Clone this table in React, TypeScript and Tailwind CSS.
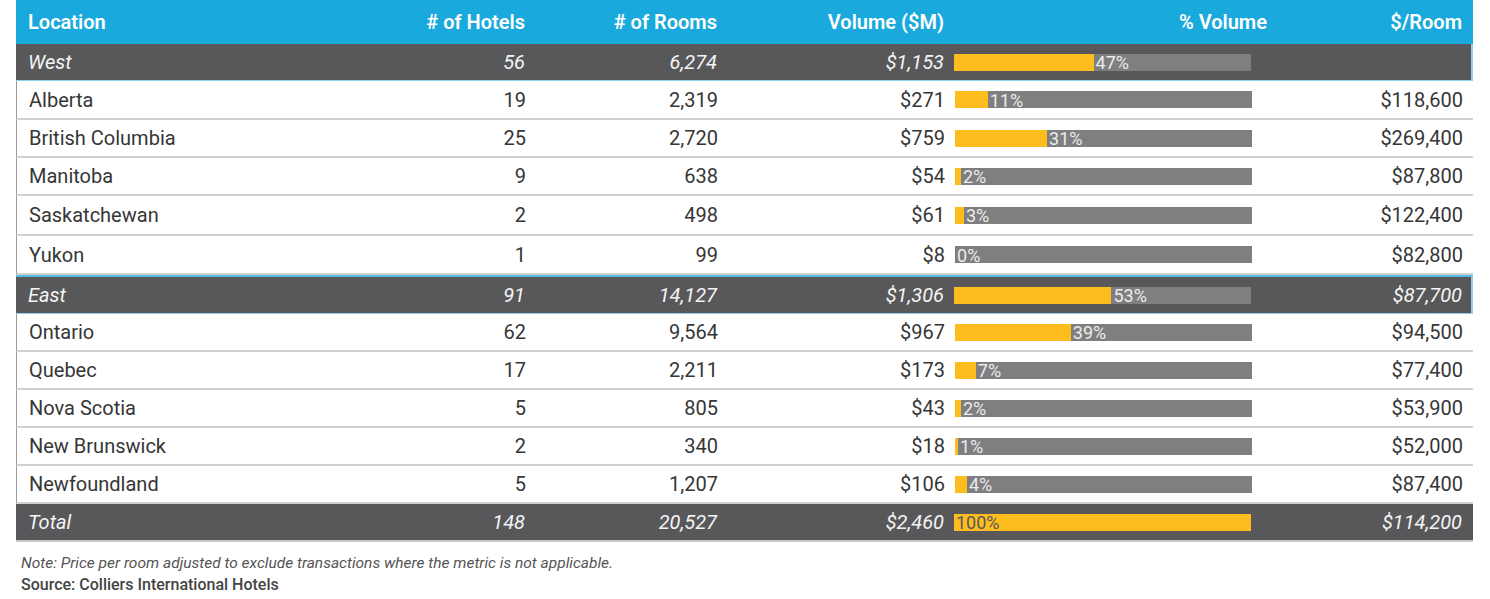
type Row = {
  name: string;
  hotels: string;
  rooms: string;
  volume: string;
  pct: number;
  price: string;
  kind: "region" | "province" | "total";
  h: string;
};

const rows: Row[] = [
  { name: "West", hotels: "56", rooms: "6,274", volume: "$1,153", pct: 47, price: "", kind: "region", h: "h-[37px]" },
  { name: "Alberta", hotels: "19", rooms: "2,319", volume: "$271", pct: 11, price: "$118,600", kind: "province", h: "h-[39px]" },
  { name: "British Columbia", hotels: "25", rooms: "2,720", volume: "$759", pct: 31, price: "$269,400", kind: "province", h: "h-[38px]" },
  { name: "Manitoba", hotels: "9", rooms: "638", volume: "$54", pct: 2, price: "$87,800", kind: "province", h: "h-[38px]" },
  { name: "Saskatchewan", hotels: "2", rooms: "498", volume: "$61", pct: 3, price: "$122,400", kind: "province", h: "h-[40px]" },
  { name: "Yukon", hotels: "1", rooms: "99", volume: "$8", pct: 0, price: "$82,800", kind: "province", h: "h-[39px]" },
  { name: "East", hotels: "91", rooms: "14,127", volume: "$1,306", pct: 53, price: "$87,700", kind: "region", h: "h-[39px]" },
  { name: "Ontario", hotels: "62", rooms: "9,564", volume: "$967", pct: 39, price: "$94,500", kind: "province", h: "h-[38px]" },
  { name: "Quebec", hotels: "17", rooms: "2,211", volume: "$173", pct: 7, price: "$77,400", kind: "province", h: "h-[38px]" },
  { name: "Nova Scotia", hotels: "5", rooms: "805", volume: "$43", pct: 2, price: "$53,900", kind: "province", h: "h-[38px]" },
  { name: "New Brunswick", hotels: "2", rooms: "340", volume: "$18", pct: 1, price: "$52,000", kind: "province", h: "h-[38px]" },
  { name: "Newfoundland", hotels: "5", rooms: "1,207", volume: "$106", pct: 4, price: "$87,400", kind: "province", h: "h-[38px]" },
  { name: "Total", hotels: "148", rooms: "20,527", volume: "$2,460", pct: 100, price: "$114,200", kind: "total", h: "h-[38px]" },
];

const grid = "grid grid-cols-[314px_195px_192px_227px_10px_313px_206px] items-center";

function Bar({ pct }: { pct: number }) {
  const full = pct >= 100;
  return (
    <div className="flex h-[17px] w-[297px] bg-[#7f7f81] not-italic">
      {/* yellow share, width comes from the data */}
      <div className="h-full bg-[#fdbd1f]" style={{ width: `${pct}%`, display: full ? "none" : undefined }} />
      <div
        className={
          "flex h-full items-center pl-[2px] pt-[2px] text-[18px] leading-none " +
          (full ? "w-full bg-[#fdbd1f] text-[#58585a]" : "text-[#ececec]")
        }
      >
        {pct}%
      </div>
    </div>
  );
}

function TableRow({ row }: { row: Row }) {
  const tone =
    row.kind === "region"
      ? "bg-[#58585a] text-[#f4f4f4] italic border-b border-[#8fd0ea] border-r-2 border-r-[#8fd0ea]"
      : row.kind === "total"
        ? "bg-[#58585a] text-[#f4f4f4] italic border-b-2 border-[#c9c9c9]"
        : "bg-white text-[#363636] border-b-2 border-[#d2d2d2] border-l border-l-[#9a9a9a]";
  return (
    <div className={`${grid} ${row.h} ${tone} ${row.name === "East" ? "border-t-2 border-t-[#55bde3]" : ""}`}>
      <div className="pl-[12px]">{row.name}</div>
      <div className="text-right">{row.hotels}</div>
      <div className="text-right">{row.rooms}</div>
      <div className="text-right">{row.volume}</div>
      <div />
      <div>
        <Bar pct={row.pct} />
      </div>
      <div className="pr-[11px] text-right">{row.price}</div>
    </div>
  );
}

export default function App() {
  return (
    <div className="h-[599px] w-[1490px] bg-white font-['Roboto',sans-serif]">
      <div className="ml-[16px] w-[1457px] text-[20px]">
        <div className={`${grid} h-[44px] bg-[#1aa9dc] font-semibold text-white`}>
          <div className="pl-[12px]">Location</div>
          <div className="text-right"># of Hotels</div>
          <div className="text-right"># of Rooms</div>
          <div className="text-right">Volume ($M)</div>
          <div />
          <div className="text-right">% Volume</div>
          <div className="pr-[11px] text-right">$/Room</div>
        </div>
        {rows.map((r) => (
          <TableRow key={r.name} row={r} />
        ))}
      </div>
      <div className="ml-[21px] mt-[11px] leading-[21px]">
        <p className="text-[15.5px] italic text-[#555]">
          Note: Price per room adjusted to exclude transactions where the metric is not applicable.
        </p>
        <p className="text-[16px] font-medium text-[#444]">Source: Colliers International Hotels</p>
      </div>
    </div>
  );
}
